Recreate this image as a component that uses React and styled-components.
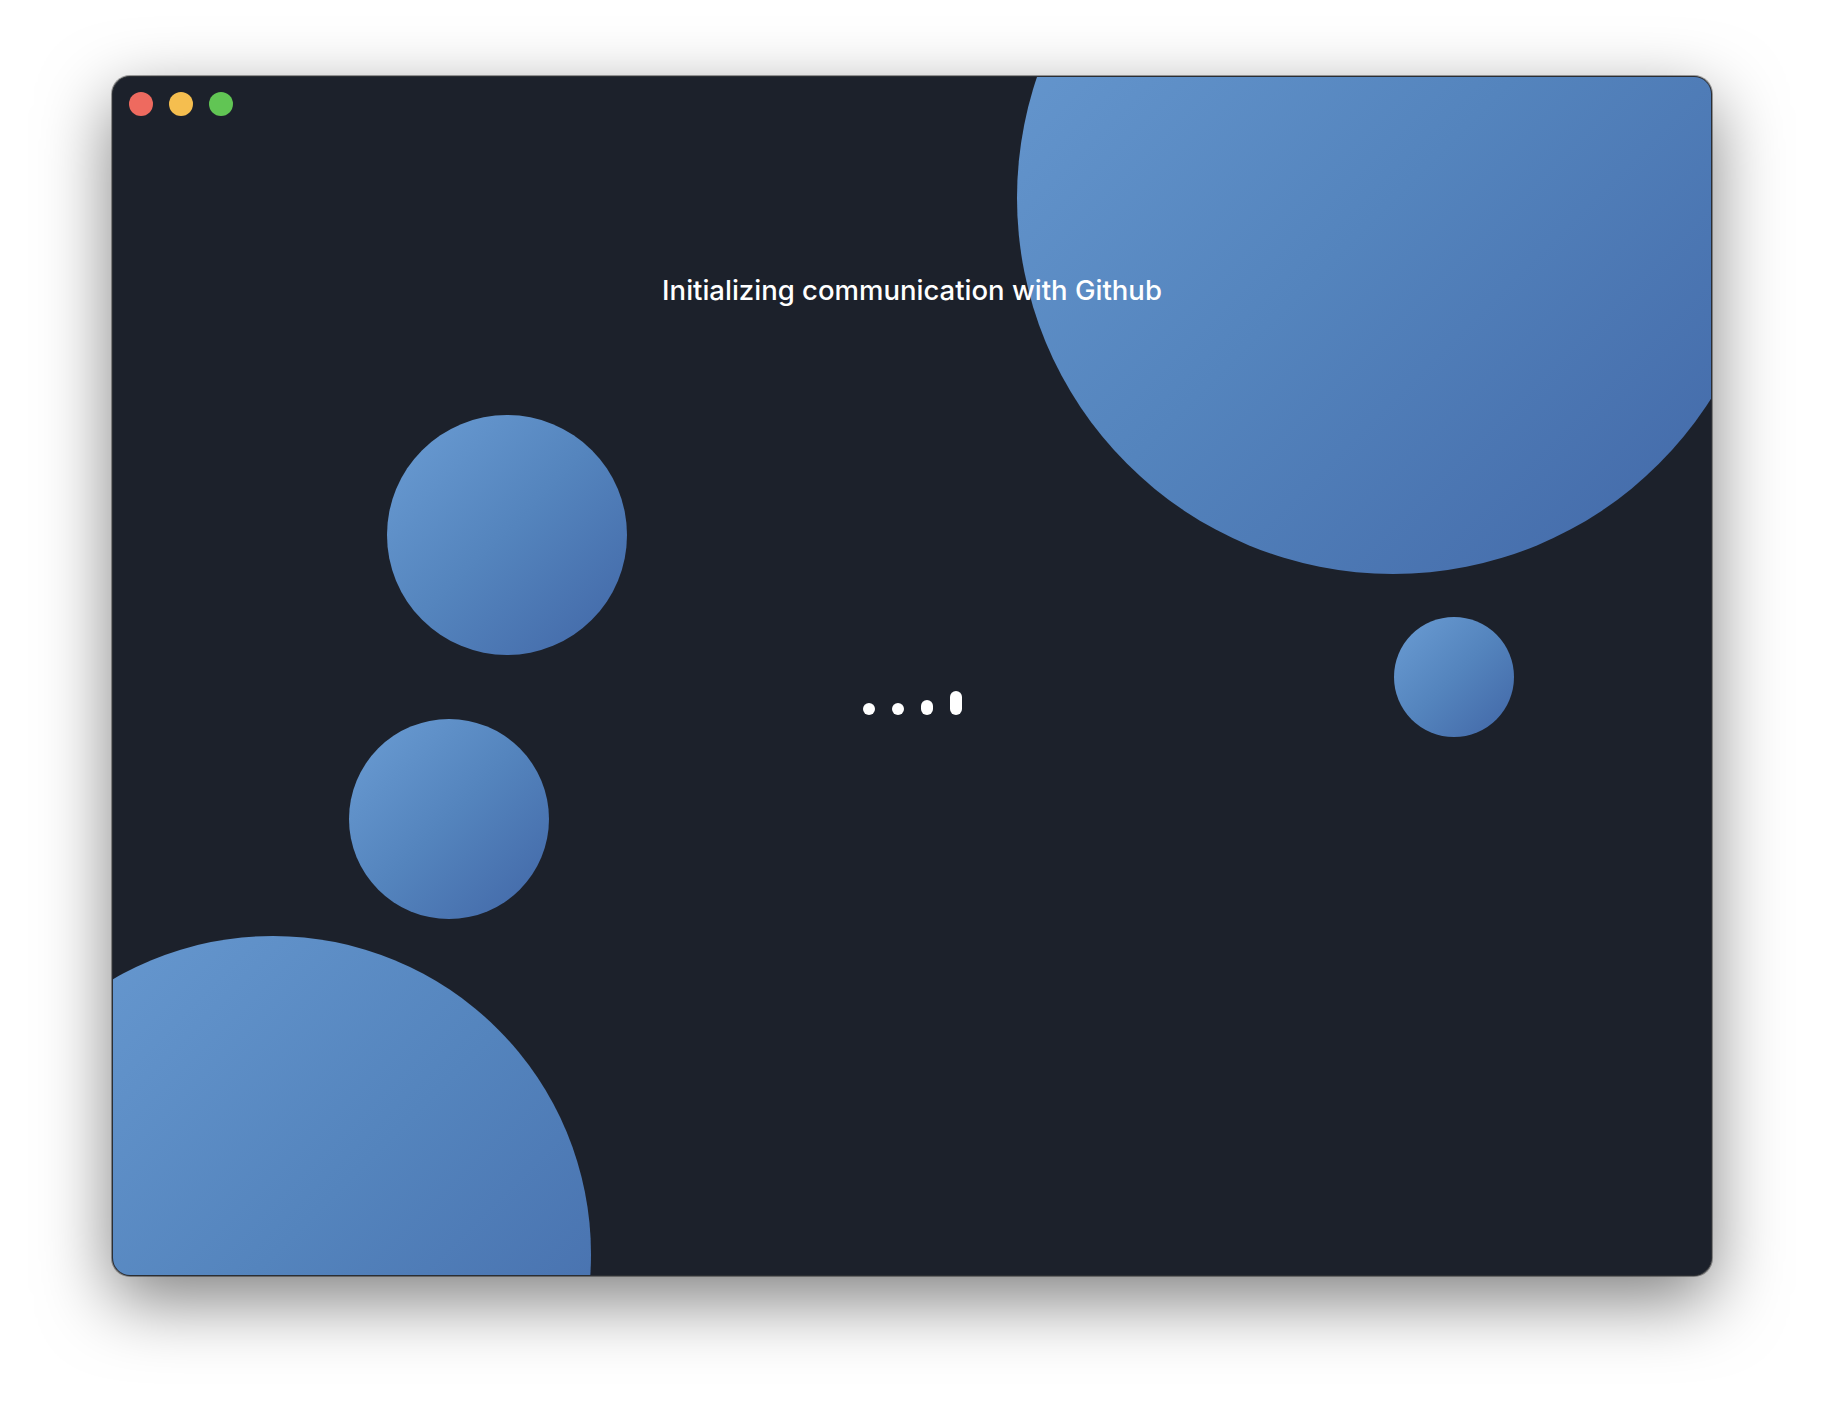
import React from 'react'
import styled, { createGlobalStyle } from 'styled-components'

const GlobalStyle = createGlobalStyle`
  html, body {
    margin: 0;
    padding: 0;
    background: #ffffff;
  }
  body {
    font-family: Inter, "Noto Sans", sans-serif;
  }
`

const Page = styled.div`
  width: 1824px;
  height: 1424px;
  padding: 76px 0 0 112px;
  box-sizing: border-box;
`

const Window = styled.div`
  position: relative;
  width: 1600px;
  height: 1200px;
  box-sizing: border-box;
  background: #1c212b;
  border-radius: 18px;
  overflow: hidden;
  border: 1px solid #2b2e33;
  box-shadow: 0 24px 70px rgba(0, 0, 0, 0.5), 0 0 0 1px rgba(0, 0, 0, 0.35);
  display: flex;
  flex-direction: column;
  align-items: center;
`

const Bubble = styled.div`
  position: absolute;
  left: ${p => p.$x}px;
  top: ${p => p.$y}px;
  width: ${p => p.$size}px;
  height: ${p => p.$size}px;
  border-radius: 50%;
  background: linear-gradient(135deg, #6b9dd4 0%, #5484bd 50%, #4166a6 100%);
  z-index: 0;
`

const TitleBar = styled.div`
  align-self: stretch;
  display: flex;
  gap: 16px;
  padding: 15px 16px;
  position: relative;
  z-index: 1;
`

const Light = styled.span`
  width: 24px;
  height: 24px;
  border-radius: 50%;
  background: ${p => p.$color};
`

const Message = styled.h1`
  margin: 143px 0 0;
  font-size: 27.5px;
  font-weight: 500;
  line-height: 32px;
  color: #ffffff;
  letter-spacing: 0;
  position: relative;
  z-index: 1;
`

const Loader = styled.div`
  margin-top: 385px;
  height: 24px;
  display: flex;
  align-items: flex-end;
  gap: 17px;
  position: relative;
  z-index: 1;
`

const Bar = styled.span`
  width: 12px;
  height: ${p => p.$h}px;
  border-radius: 6px;
  background: #ffffff;
`

const bubbles = [
  { x: 904, y: -255, size: 752 },
  { x: 274, y: 338, size: 240 },
  { x: 236, y: 642, size: 200 },
  { x: 1281, y: 540, size: 120 },
  { x: -158, y: 859, size: 636 },
]

const App = () => (
  <>
    <GlobalStyle />
    <Page>
      <Window>
        {bubbles.map((b, i) => (
          <Bubble key={i} $x={b.x} $y={b.y} $size={b.size} />
        ))}
        <TitleBar>
          <Light $color="#ee6a5f" />
          <Light $color="#f5be4f" />
          <Light $color="#61c554" />
        </TitleBar>
        <Message>Initializing communication with Github</Message>
        <Loader>
          <Bar $h={12} />
          <Bar $h={12} />
          <Bar $h={15} />
          <Bar $h={24} />
        </Loader>
      </Window>
    </Page>
  </>
)

export default App
